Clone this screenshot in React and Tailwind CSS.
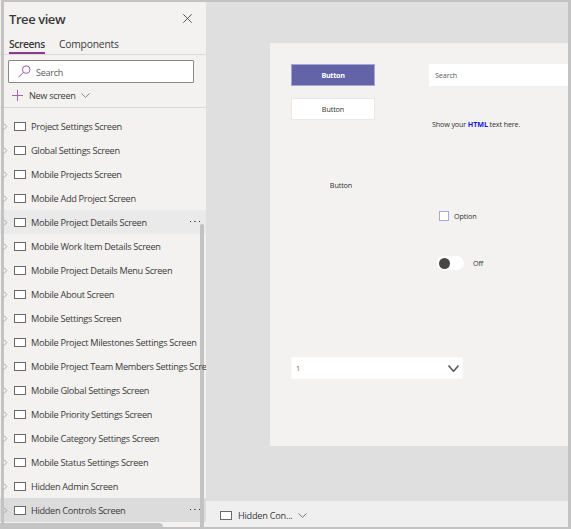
import React from "react";

const screens = [
  ["Project Settings Screen"],
  ["Global Settings Screen"],
  ["Mobile Projects Screen"],
  ["Mobile Add Project Screen"],
  ["Mobile Project Details Screen", "hover"],
  ["Mobile Work Item Details Screen"],
  ["Mobile Project Details Menu Screen"],
  ["Mobile About Screen"],
  ["Mobile Settings Screen"],
  ["Mobile Project Milestones Settings Screen"],
  ["Mobile Project Team Members Settings Screen"],
  ["Mobile Global Settings Screen"],
  ["Mobile Priority Settings Screen"],
  ["Mobile Category Settings Screen"],
  ["Mobile Status Settings Screen"],
  ["Hidden Admin Screen"],
  ["Hidden Controls Screen", "selected"],
];

function Chevron({ className, w = 9, h = 5, sw = 1 }) {
  return (
    <svg className={className} width={w} height={h} viewBox={`0 0 ${w} ${h}`} fill="none" stroke="currentColor" strokeWidth={sw}>
      <path d={`M.5 .5 L${w / 2} ${h - 0.7} L${w - 0.5} .5`} />
    </svg>
  );
}

function ScreenIcon() {
  return <span className="h-[9px] w-3 shrink-0 border border-[#6b6967] bg-white" />;
}

function Row({ name, state }) {
  const bg = state === "selected" ? "bg-[#dcdcdc]" : state === "hover" ? "bg-[#eaeaea]" : "";
  return (
    <li className={`flex h-6 items-center overflow-hidden ${bg}`}>
      <svg className="ml-[3px] mr-[6px] shrink-0 text-[#a19f9d]" width="5" height="7" viewBox="0 0 5 7" fill="none" stroke="currentColor" strokeWidth=".9">
        <path d="M1 .5 L3.8 3.5 L1 6.5" />
      </svg>
      <ScreenIcon />
      <span className="relative z-10 ml-[5px] mt-[2px] whitespace-nowrap">{name}</span>
      {state && (
        <span className="ml-auto mr-[6px] mt-[-2px] flex gap-[3px]">
          <i className="h-px w-[1.5px] bg-[#323130]" />
          <i className="h-px w-[1.5px] bg-[#a0602c]" />
          <i className="h-px w-[1.5px] bg-[#323130]" />
        </span>
      )}
    </li>
  );
}

function TreePanel() {
  return (
    <aside className="relative flex h-[529px] w-[206px] shrink-0 flex-col overflow-hidden bg-[#f3f2f1] text-[9.2px] tracking-[-0.31px] text-[#3b3a39]">
      <header className="flex h-[37px] items-center justify-between pl-[9px] pr-[14px]">
        <h1 className="mt-[3px] text-[13px] font-semibold tracking-[-0.43px] text-[#3b3a39]">Tree view</h1>
        <svg width="9" height="9" viewBox="0 0 9 9" stroke="#484644" strokeWidth=".9"><path d="M.3 .3 8.7 8.7M8.7 .3 .3 8.7" /></svg>
      </header>
      <nav className="flex h-[18px] gap-[14px] border-b border-[#d9d8d7] pl-[9px] text-[10.3px] leading-[15px] tracking-[-0.2px]">
        <span className="h-[17px] w-[36px] whitespace-nowrap border-b-2 border-[#8a3c8c] font-semibold tracking-[-0.4px]">Screens</span>
        <span>Components</span>
      </nav>
      <label className="ml-[8px] mt-[5px] flex h-[23px] w-[186px] shrink-0 items-center rounded-[1px] border border-[#8a8886] bg-white pl-[9px] text-[9px] tracking-[-0.25px] text-[#605e5c]">
        <svg width="13" height="13" viewBox="0 0 13 13" fill="none" stroke="#9b5a9d" strokeWidth="1"><circle cx="8.2" cy="4.6" r="3.8" /><path d="M5.5 7.3.5 12.3" /></svg>
        <span className="ml-[5px] mt-[2px]">Search</span>
      </label>
      <div className="flex h-[25px] shrink-0 items-center border-b border-[#d9d8d7] pl-[12px]">
        <svg width="11" height="11" viewBox="0 0 11 11" stroke="#a766aa" strokeWidth="1"><path d="M5.5 0V11M0 5.5H11" /></svg>
        <span className="ml-[6px] mt-[2px] w-[46px] whitespace-nowrap tracking-[-0.36px]">New screen</span>
        <Chevron className="ml-[6px] text-[#8a8886]" />
      </div>
      <ul className="mt-[6px]">
        {screens.map(([name, state]) => <Row key={name} name={name} state={state} />)}
      </ul>
      <div className="absolute bottom-0 left-0 h-[6px] w-[163px] rounded-tr-sm bg-[#c5c5c5]" />
      <div className="absolute bottom-0 left-[200px] top-[224px] w-1 rounded-t-sm bg-[#c1c0c0]/95" />
    </aside>
  );
}

function Canvas() {
  return (
    <section className="flex h-[403px] w-[302px] bg-[#f3f2f1] pl-[21px] pt-[21px] text-[7.2px] tracking-[-0.1px] text-[#323130]">
      <div className="flex w-[138px] flex-col">
        <button className="h-[22px] w-[84px] border border-[#a5a6d2] bg-[#6264a7] font-bold tracking-[-0.3px] text-white">Button</button>
        <button className="mt-[12px] h-[22px] w-[84px] border border-[#e9e8e7] bg-white">Button</button>
        <button className="ml-[8px] mt-[54px] h-[22px] w-[84px]">Button</button>
        <div className="mt-[161px] flex h-[22px] w-[172px] items-center justify-between border border-[#faf9f8] bg-white pl-[4px] pr-[3px] text-[#605e5c]">
          <span>1</span>
          <Chevron w={11} h={7} sw={1.6} className="text-[#605e5c]" />
        </div>
      </div>
      <div className="flex flex-col">
        <div className="flex h-[22px] w-[150px] items-center bg-white pl-[6px] text-[#605e5c]">Search</div>
        <p className="ml-[3px] mt-[32px] leading-[12px] tracking-[-0.14px]">Show your <b className="text-[#1616ee]">HTML</b> text here.</p>
        <div className="ml-[10px] mt-[75px] flex h-[22px] items-center">
          <span className="size-[10px] border border-[#a6a7dc] bg-white" />
          <span className="ml-[5px]">Option</span>
        </div>
        <div className="ml-[8px] mt-[25px] flex h-[22px] items-center">
          <span className="flex h-[14px] w-[27px] items-center rounded-full bg-white pl-[2px]"><i className="size-[11px] rounded-full bg-[#484644]" /></span>
          <span className="ml-[9px]">Off</span>
        </div>
      </div>
    </section>
  );
}

export default function App() {
  return (
    <div className="relative flex h-[529px] w-[571px] overflow-hidden bg-[#dfdfdf] font-['Open_Sans','Noto_Sans',sans-serif]">
      <TreePanel />
      <main className="flex min-w-0 flex-1 flex-col">
        <div className="h-[501px] overflow-hidden pl-[64px] pt-[43px]"><Canvas /></div>
        <footer className="flex h-[28px] items-center bg-[#efefef] pl-[14px] text-[9.2px] tracking-[-0.25px] text-[#3b3a39]">
          <ScreenIcon />
          <span className="ml-[6px] mt-[2px]">Hidden Con...</span>
          <Chevron className="ml-[6px] text-[#797775]" />
        </footer>
      </main>
      <div className="pointer-events-none absolute inset-y-0 left-px right-0 border-b-2 border-l-[3px] border-r-[3px] border-t-2 border-[#c3c3c3]" />
    </div>
  );
}
